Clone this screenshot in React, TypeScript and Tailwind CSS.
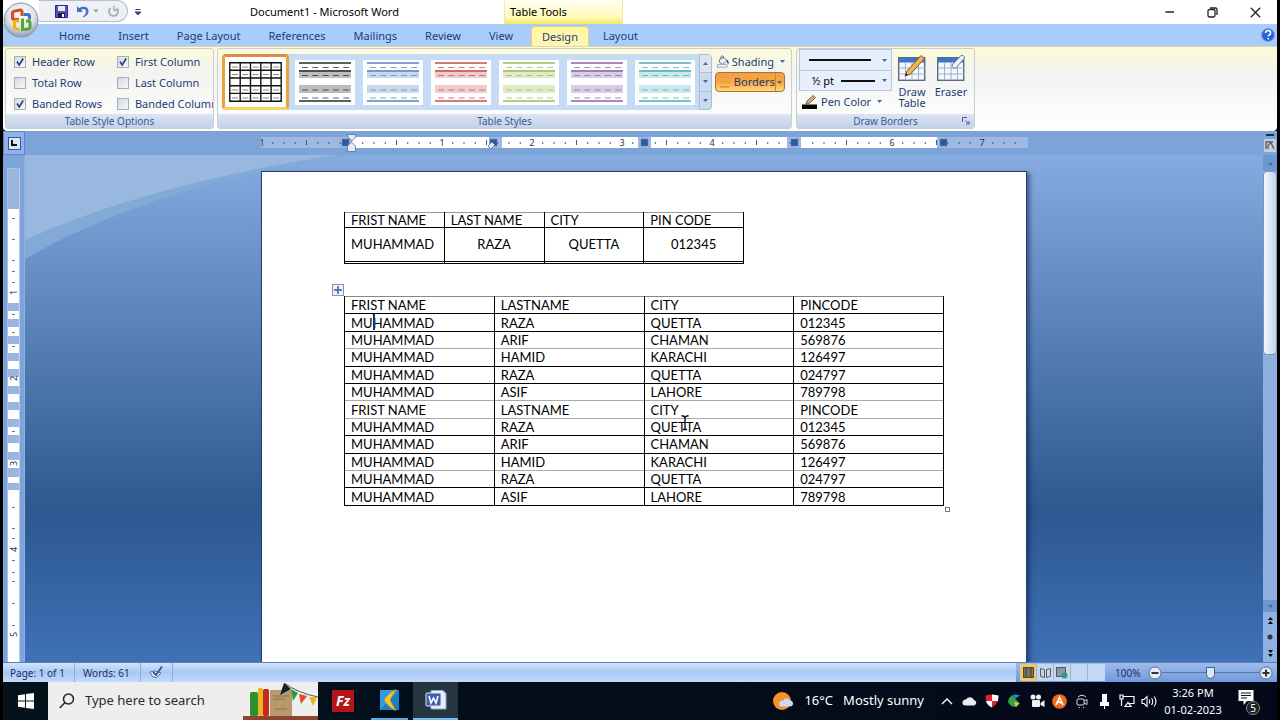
import React from "react";

const UI = "font-['Noto_Sans','Open_Sans',sans-serif]";

type RowData = { cells: string[]; soft?: boolean };

const people: RowData[] = [
  { cells: ["FRIST NAME", "LASTNAME", "CITY", "PINCODE"] },
  { cells: ["MUHAMMAD", "RAZA", "QUETTA", "012345"] },
  { cells: ["MUHAMMAD", "ARIF", "CHAMAN", "569876"], soft: true },
  { cells: ["MUHAMMAD", "HAMID", "KARACHI", "126497"] },
  { cells: ["MUHAMMAD", "RAZA", "QUETTA", "024797"] },
  { cells: ["MUHAMMAD", "ASIF", "LAHORE", "789798"], soft: true },
  { cells: ["FRIST NAME", "LASTNAME", "CITY", "PINCODE"], soft: true },
  { cells: ["MUHAMMAD", "RAZA", "QUETTA", "012345"] },
  { cells: ["MUHAMMAD", "ARIF", "CHAMAN", "569876"] },
  { cells: ["MUHAMMAD", "HAMID", "KARACHI", "126497"], soft: true },
  { cells: ["MUHAMMAD", "RAZA", "QUETTA", "024797"] },
  { cells: ["MUHAMMAD", "ASIF", "LAHORE", "789798"] },
];

function TitleBar() {
  return (
    <header className="flex h-6 shrink-0 items-stretch bg-white text-[11px] text-black">
      <div className="ml-9 flex h-[22px] w-[89px] items-center gap-2 rounded-r-full border border-l-0 border-[#b9bec8] bg-[#eef0f4] pl-4">
        <button aria-label="Save">
          <svg width="13" height="13" viewBox="0 0 13 13">
            <path d="M0.5 0.5h12v12h-12z" fill="#5a50b8" stroke="#2d2a86" />
            <rect x="3" y="1" width="7" height="5" fill="#e8ecfa" />
            <rect x="3" y="8" width="7" height="5" fill="#1d1b5c" />
            <rect x="7" y="9" width="2" height="3" fill="#fff" />
          </svg>
        </button>
        <button aria-label="Undo" className="flex items-center gap-1">
          <svg width="13" height="13" viewBox="0 0 13 13">
            <path d="M1 1v6h6L5 5c2-2 5-1 5 1.500S8 11 6 12.500c4-.8 6.500-3 6.500-6.500C12.500 1.500 7 .5 3.200 3.200z" fill="#3f6fc6" />
          </svg>
          <svg width="6" height="4" viewBox="0 0 6 4"><path d="M0.500 0.500h5L3 3.500z" fill="#8a94a8" /></svg>
        </button>
        <button aria-label="Repeat">
          <svg width="13" height="13" viewBox="0 0 13 13" fill="none" stroke="#a9b0bd" strokeWidth="2">
            <path d="M3.500 3.200a4.500 4.500 0 1 0 6 0" />
            <path d="M7 .8v4.500h4.500" strokeWidth="1.500" />
          </svg>
        </button>
      </div>
      <button aria-label="Customize Quick Access Toolbar" className="flex w-5 items-center justify-center">
        <svg width="6" height="7" viewBox="0 0 6 7"><path d="M0.500 0.500h5M0 3h6L3 6z" stroke="#334a7c" fill="#334a7c" strokeWidth="1" /></svg>
      </button>
      <h1 className="ml-[102px] w-[254px] self-center whitespace-nowrap leading-4">Document1 - Microsoft Word</h1>
      <div className="flex w-[119px] items-center border-x border-[#ece9b4] bg-linear-to-b from-[#fffef2] via-[#fffbb8] via-70% to-[#f5e664] pl-[5px] leading-4">
        Table Tools
      </div>
      <div className="ml-auto flex items-center text-[#222]">
        <button aria-label="Minimize" className="flex w-[42px] justify-center">
          <svg width="10" height="10" viewBox="0 0 10 10"><path d="M0.500 5h8.500" stroke="currentColor" strokeWidth="1.500" /></svg>
        </button>
        <button aria-label="Restore" className="flex w-[43px] justify-center">
          <svg width="11" height="11" viewBox="0 0 11 11" fill="none" stroke="currentColor" strokeWidth="1.300">
            <rect x="1" y="2.500" width="7" height="7.500" rx="1.500" /><path d="M3 1h5.500c1 0 1.500.5 1.500 1.500V8" />
          </svg>
        </button>
        <button aria-label="Close" className="flex w-[43px] justify-center">
          <svg width="11" height="11" viewBox="0 0 11 11"><path d="M.8.8l9.400 9.400M10.200.8L.8 10.200" stroke="currentColor" strokeWidth="1.300" /></svg>
        </button>
      </div>
    </header>
  );
}

function OfficeButton() {
  return (
    <button aria-label="Office Button" className="absolute left-[3px] top-[2px] z-10">
      <svg width="36" height="36" viewBox="0 0 36 36">
        <defs>
          <radialGradient id="orb" cx="50%" cy="35%" r="65%">
            <stop offset="0" stopColor="#ffffff" /><stop offset="0.6" stopColor="#dfe3ea" /><stop offset="1" stopColor="#8f9bb0" />
          </radialGradient>
        </defs>
        <circle cx="18" cy="18" r="17" fill="url(#orb)" stroke="#8793a8" />
        <g fill="none" strokeWidth="3">
          <path d="M16 17.500h-4.500q-2 0-2-2V11q0-1.500 2-1.900L17 8q2-.3 2 2v4" stroke="#d8491c" />
          <path d="M20.500 12.500h4q2 0 2 2v3" stroke="#3a74d0" />
          <path d="M16.500 19h-3.500q-1.500 0-1.500 1.500V25q0 1.500 2 1.900l3 .6" stroke="#efb312" />
          <path d="M19.500 16.500v11l5.500-.5q2-.3 2-2v-4q0-2-2-2h-2" stroke="#52a33a" />
        </g>
      </svg>
    </button>
  );
}

function Tabs() {
  const tabs = ["Home", "Insert", "Page Layout", "References", "Mailings", "Review", "View", "Design", "Layout"];
  return (
    <nav className="flex h-[22px] shrink-0 items-stretch bg-[#a9cdfa] pl-[42px] text-[11px] leading-4 text-[#1c3c80]">
      {tabs.map((t) => (
        <button
          key={t}
          className={
            t === "Design"
              ? "ml-1 mt-0.5 rounded-t border border-b-0 border-[#e0d47a] bg-linear-to-b from-[#fff9a0] to-[#fdf6b4] px-2.5"
              : "px-3.5 pt-0.5"
          }
        >
          {t}
        </button>
      ))}
      <button aria-label="Help" className="ml-auto mr-0.5 self-center">
        <svg width="14" height="14" viewBox="0 0 14 14">
          <circle cx="7" cy="7" r="6.500" fill="#2a63d8" stroke="#7ea2e6" />
          <path d="M4.500 5q.3-2.500 2.700-2.500T9.600 5q0 1.300-1.400 2-.9.500-.9 1.500M7.300 10v1.500" fill="none" stroke="#fff" strokeWidth="1.600" />
        </svg>
      </button>
    </nav>
  );
}

function Group({ title, className, launcher, children }: { title: string; className: string; launcher?: boolean; children: React.ReactNode }) {
  return (
    <section className={`flex shrink-0 flex-col overflow-hidden rounded-[3px] border border-[#c9ccd2] ${className}`}>
      <div className="flex min-h-0 flex-1">{children}</div>
      <div className="relative h-[14px] shrink-0 bg-linear-to-b from-[#dbe5f4] to-[#c3d0e6] text-center text-[10px] leading-[14px] text-[#3c5a96]">
        {title}
        {launcher && (
          <button aria-label="Draw Borders options" className="absolute right-1 top-[3px]">
            <svg width="8" height="8" viewBox="0 0 8 8" fill="none" stroke="#44608f"><path d="M.5 5V.5H5M3.500 3.500L7 7M7 4v3H4" /></svg>
          </button>
        )}
      </div>
    </section>
  );
}

function Option({ label, checked }: { label: string; checked?: boolean }) {
  return (
    <label className="flex h-[21px] items-center gap-[6px] whitespace-nowrap">
      <span className="relative flex h-3 w-3">
        <input
          type="checkbox"
          defaultChecked={checked}
          className="peer h-3 w-3 appearance-none border border-[#a3aebf] bg-linear-to-br from-[#d5dae2] to-[#f6f8fa]"
        />
        <svg className="pointer-events-none absolute left-0 top-0 hidden peer-checked:block" width="12" height="12" viewBox="0 0 12 12">
          <path d="M3 5.500L5.200 9 9.200 2.500" fill="none" stroke="#2a4378" strokeWidth="1.700" />
        </svg>
      </span>
      {label}
    </label>
  );
}

function GridThumb() {
  return (
    <svg width="53" height="40" viewBox="0 0 53 40">
      <rect width="53" height="40" fill="#fff" />
      <path d="M.8 .8h51.400v38.400H.8zM.8 8.300h51.400M.8 16h51.400M.8 23.700h51.400M.8 31.400h51.400M11.200 1v38M21.500 1v38M31.800 1v38M42.100 1v38" fill="none" stroke="#111" strokeWidth="1.400" />
      <path d="M3 5h50M3 12.500h50M3 28h50M3 36h50" stroke="#888" strokeWidth="1" strokeDasharray="6 4.300" />
    </svg>
  );
}

function StyleThumb({ line, band, name }: { line: string; band: string; name: string }) {
  return (
    <button aria-label={name} className="flex h-[45px] w-[60px] items-center justify-center bg-white">
      <svg width="52" height="40" viewBox="0 0 52 40">
        <rect y="8" width="52" height="8" fill={band} />
        <rect y="23" width="52" height="8" fill={band} />
        <path d="M0 1h52M0 9h52M0 39h52" stroke={line} strokeWidth="1.600" />
        <path d="M3 5.500h49M3 13.500h49M3 28h49M3 36h49" stroke={line} strokeWidth="1" strokeOpacity="0.750" strokeDasharray="6 4.300" />
      </svg>
    </button>
  );
}

const thumbs = [
  { name: "Light Shading", line: "#2b2b2b", band: "#bdbdbd" },
  { name: "Light Shading Accent 1", line: "#5b83b8", band: "#c9d9ec" },
  { name: "Light Shading Accent 2", line: "#c2504f", band: "#efcbcb" },
  { name: "Light Shading Accent 3", line: "#9cbb5c", band: "#dfebc8" },
  { name: "Light Shading Accent 4", line: "#8467a6", band: "#d8cde4" },
  { name: "Light Shading Accent 5", line: "#4bacb8", band: "#c8e8ec" },
];

function Caret({ up }: { up?: boolean }) {
  return (
    <svg width="5" height="3" viewBox="0 0 5 3" className="shrink-0">
      <path d={up ? "M0 3h5L2.500 0z" : "M0 0h5L2.500 3z"} fill="#48669c" />
    </svg>
  );
}

function TableIcon({ children }: { children: React.ReactNode }) {
  return (
    <svg width="28" height="28" viewBox="0 0 28 28">
      <rect x=".7" y="3.700" width="26" height="22.600" fill="#f4f7fc" stroke="#5a6a88" strokeWidth="1.400" />
      <rect x="1" y="4" width="25.500" height="4.500" fill="#3f74cc" />
      <path d="M1 14h26M1 20h26M7.500 8v18M14 8v18M20.500 8v18" stroke="#9fb0cc" />
      {children}
    </svg>
  );
}

function Ribbon() {
  return (
    <div className="flex h-[85px] shrink-0 items-stretch gap-[3px] rounded-b border-t border-[#dcd9a8] bg-linear-to-b from-[#fdfbd6] via-[#f3f3f1] via-30% to-white px-0.5 pb-0.5 pt-px text-[11px] leading-4 text-[#1f3b77]">
      <Group title="Table Style Options" className="w-[209px]">
        <div className="flex gap-[15px] pl-2 pt-[2px]">
          <div><Option label="Header Row" checked /><Option label="Total Row" /><Option label="Banded Rows" checked /></div>
          <div><Option label="First Column" checked /><Option label="Last Column" /><Option label="Banded Columns" /></div>
        </div>
      </Group>
      <Group title="Table Styles" className="w-[575px]">
        <div className="ml-1 mt-[5px] flex h-14 items-center gap-2 rounded bg-[#c6dcf5]">
          <button aria-label="Table Grid" className="-mr-0.5 flex h-14 w-[67px] items-center justify-center rounded-sm border-[3px] border-[#e8a33d] border-b-[#f7d060] border-t-[#dd8a4a] bg-white">
            <GridThumb />
          </button>
          {thumbs.map((t) => <StyleThumb key={t.name} {...t} />)}
          <div className="-ml-1 flex h-14 w-[13px] flex-col divide-y divide-[#a9bedc] rounded-r border border-[#a9bedc] bg-[#c9dbf1]">
            <button aria-label="Scroll up" className="flex flex-1 items-center justify-center bg-[#dfe3ea]"><Caret up /></button>
            <button aria-label="Scroll down" className="flex flex-1 items-center justify-center"><Caret /></button>
            <button aria-label="More styles" className="flex flex-1 items-center justify-center"><Caret /></button>
          </div>
        </div>
        <div className="ml-[3px] mt-[2px] flex w-[70px] flex-col">
          <button className="flex h-[21px] items-center gap-0.5 whitespace-nowrap pl-0.5">
            <svg width="16" height="15" viewBox="0 0 16 15">
              <path d="M3 5l5-3 4.500 4.500L7 11 3 8.500z" fill="#eef2f8" stroke="#555f75" />
              <path d="M5 5V2q0-1.500 1.500-1.500T8 2v2" fill="none" stroke="#555f75" />
              <path d="M12 5q3 1 2.500 6-2.500-1-2.500-6" fill="#2a56ac" />
              <rect x=".5" y="11.500" width="12" height="3" fill="#fff" stroke="#8a93a6" />
            </svg>
            Shading<span className="ml-1 flex"><Caret /></span>
          </button>
          <button className="flex h-5 items-center rounded-sm border border-[#a8742c] bg-linear-to-b from-[#f0a048] via-[#f7a63c] to-[#ffd97a] pl-1">
            <svg width="12" height="14" viewBox="0 0 12 14"><path d="M1 1h11M1 7h11" stroke="#c78a3a" strokeDasharray="1 1" /><path d="M0 13h12" stroke="#8a5a1c" strokeWidth="1" strokeDasharray="3 1" /></svg>
            <span className="ml-1 flex-1 text-left">Borders</span>
            <span className="flex h-full w-[11px] items-center justify-center border-l border-[#c8822e]"><Caret /></span>
          </button>
        </div>
      </Group>
      <Group title="Draw Borders" className="ml-px w-[179px]" launcher>
        <div className="ml-0.5 flex w-[93px] flex-col">
          <button aria-label="Line Style" className="flex h-[22px] items-center justify-between border border-[#b4c7e2] bg-[#e6effa] pl-[9px] pr-1">
            <svg width="62" height="2"><rect width="62" height="2" fill="#111" /></svg><Caret />
          </button>
          <button aria-label="Line Weight" className="flex h-5 items-center justify-between border border-t-0 border-[#b4c7e2] bg-[#e6effa] pl-3 pr-1 text-black">
            ½ pt<svg width="34" height="2"><rect width="34" height="2" fill="#111" /></svg><Caret />
          </button>
          <button className="flex h-[21px] items-center gap-1 whitespace-nowrap pl-[3px]">
            <svg width="15" height="14" viewBox="0 0 15 14"><path d="M4 9l1-3 6-5.500 2.500 2L8 8z" fill="#c9b184" stroke="#5f4c2c" strokeWidth=".8" /><rect y="9.500" width="15" height="4.500" fill="#000" /></svg>
            Pen Color<span className="ml-0.5 flex"><Caret /></span>
          </button>
        </div>
        <div className="flex flex-1 gap-[3px] pl-0.5 pt-[5px] text-center leading-[11px]">
          <button className="flex w-9 flex-col items-center gap-1">
            <TableIcon><path d="M7 22l2-5L23 1.500 26.500 4.500 12.500 20z" fill="#f2b54c" stroke="#7a5a2a" /><path d="M7 22l1-3 2 2z" fill="#222" /></TableIcon>
            <span>Draw Table</span>
          </button>
          <button className="flex w-9 flex-col items-center gap-1">
            <TableIcon><path d="M15 11L24 1.500q3-1 3.500 2.500L19 14q-4 1-4-3z" fill="#eef1f6" stroke="#6a7690" /></TableIcon>
            <span>Eraser</span>
          </button>
        </div>
      </Group>
    </div>
  );
}

function HorizontalRuler() {
  const ticks = Array.from({ length: 67 }, (_, i) => i - 7);
  return (
    <svg width="767" height="18" viewBox="0 0 767 18" className="shrink-0">
      <rect y="3" width="767" height="11" fill="#9db9e2" />
      {[[91, 137], [241, 136], [390, 136], [540, 136]].map(([x, w]) => <rect key={x} x={x} y="3" width={w} height="11" fill="#fff" />)}
      {ticks.map((i) => {
        const x = 90 + i * 11.25;
        if (i % 8 === 0) return null;
        return i % 4 === 0
          ? <rect key={i} x={x} y="6" width="1" height="5" fill="#4b5a75" />
          : <rect key={i} x={x} y="8" width="1" height="2" fill="#4b5a75" />;
      })}
      {[[0, "1"], [180, "1"], [270, "2"], [360, "3"], [450, "4"], [630, "6"], [720, "7"]].map(([x, n]) => (
        <text key={x} x={Number(x) + 1} y="12" fontSize="9" textAnchor="middle" fill="#2a3344">{n}</text>
      ))}
      {[81, 229, 380, 530, 679].map((x) => <rect key={x} x={x} y="5" width="7" height="7" fill="#2f5a9e" stroke="#5f86c0" strokeWidth=".5" />)}
      <path d="M86.500.5h8v2.500l-3.500 4-4-4zM90.500 8l4 4v5.500h-8V12z" fill="#e3ebf6" stroke="#5a6e92" strokeWidth=".8" />
      <path d="M227 12l4-4 3 3-4 4z" fill="#e3ebf6" stroke="#5a6e92" strokeWidth=".8" />
    </svg>
  );
}

function VerticalRuler() {
  const white = [[41, 94], [143, 8], [159, 9], [176, 9], [193, 8], [209, 9], [226, 8], [242, 9], [259, 8], [275, 9], [292, 8], [309, 6], [322, 172]];
  return (
    <svg width="13" height="494" viewBox="0 0 13 494" className="shrink-0">
      <rect width="12.500" height="494" fill="#9bb5de" stroke="#b8cdec" />
      {white.map(([y, h]) => <rect key={y} x="1" y={y} width="11" height={h} fill="#fff" />)}
      {[50, 71, 92, 103, 114, 146, 164, 178, 263, 339, 360, 370, 392, 404, 413, 435, 457].map((y) => <rect key={y} x="5" y={y} width="3" height="1" fill="#66738c" />)}
      {[[125, "1"], [211, "2"], [296, "3"], [382, "4"], [467, "5"]].map(([y, n]) => (
        <text key={n} transform={`translate(10 ${Number(y) + 2}) rotate(-90)`} fontSize="9" fill="#2a3344">{n}</text>
      ))}
    </svg>
  );
}

function DocTableSmall() {
  const cell = "border-x border-black px-[7px] text-center";
  return (
    <table className="h-[52px] w-[400px] table-fixed border-collapse text-left">
      <thead>
        <tr className="border-b border-t border-black border-t-[#999]">
          {["FRIST NAME", "LAST NAME", "CITY", "PIN CODE"].map((h) => <th key={h} className="whitespace-nowrap border-x border-black px-[6px] font-normal">{h}</th>)}
        </tr>
      </thead>
      <tbody>
        <tr className="border-b border-black">
          <td className="border-x border-black px-[6px]">MUHAMMAD</td>
          <td className={cell}>RAZA</td><td className={cell}>QUETTA</td><td className={cell}>012345</td>
        </tr>
        <tr className="border-b border-black">{[0, 1, 2, 3].map((i) => <td key={i} className={cell} />)}</tr>
      </tbody>
    </table>
  );
}

function DocTableLarge() {
  return (
    <table className="h-[210px] w-[600px] table-fixed border-collapse border-t border-[#888] text-left">
      <tbody>
        {people.map((r, i) => (
          <tr key={i} className={r.soft ? "border-b border-[#aaa]" : "border-b border-black"}>
            {r.cells.map((c, j) => (
              <td key={j} className="border-x border-x-black px-[6px]">
                {i === 1 && j === 0 ? (
                  <span className="relative">{c}<span className="absolute -top-px left-[22px] h-4 w-0.5 bg-[#0c3a66]" /></span>
                ) : i === 7 && j === 2 ? (
                  <span className="relative">
                    {c}
                    <svg className="absolute -top-1 left-[30px]" width="8" height="16" viewBox="0 0 8 16"><path d="M.5.8Q4 .8 4 3.500 4 .8 7.500.8M4 3v11M2 14.500h4" fill="none" stroke="#111" strokeWidth="1.400" /></svg>
                  </span>
                ) : c}
              </td>
            ))}
          </tr>
        ))}
      </tbody>
    </table>
  );
}

function ScrollBar() {
  return (
    <div className="flex w-[14px] shrink-0 flex-col items-center bg-[#b4cbea] text-[#16305e]">
      <button aria-label="Scroll up" className="flex h-4 w-full items-center justify-center bg-[#6f97cf]"><Caret up /></button>
      <div className="flex w-full flex-1 flex-col bg-[#8fb0de]">
        <div className="h-[43%] w-full rounded-sm border border-[#7d93b8] bg-linear-to-r from-[#f4f7fb] to-[#c3d2e8]" />
      </div>
      <button aria-label="Scroll down" className="flex h-3 w-full items-center justify-center bg-[#6f97cf]"><Caret /></button>
      <div className="flex h-[50px] w-full flex-col items-center justify-around bg-[#8fb2e2]">
        <button aria-label="Previous page"><svg width="5" height="7" viewBox="0 0 5 7"><path d="M0 3h5L2.500 0zM0 7h5L2.500 4z" fill="#000" /></svg></button>
        <button aria-label="Browse object"><svg width="6" height="6" viewBox="0 0 6 6"><circle cx="3" cy="3" r="2.500" fill="#334" /></svg></button>
        <button aria-label="Next page"><svg width="5" height="7" viewBox="0 0 5 7"><path d="M0 0h5L2.500 3zM0 4h5L2.500 7z" fill="#000" /></svg></button>
      </div>
    </div>
  );
}

function Workspace() {
  return (
    <div className="flex min-h-0 flex-1 flex-col bg-[#7da4d8]">
      <div className="flex h-6 shrink-0 items-center">
        <div className="flex h-full w-[22px] items-center justify-center border border-[#5b86c6] bg-[#8fb3e4]">
          <button aria-label="Tab selector" className="flex h-[13px] w-[13px] items-center justify-center border border-[#35589a] bg-[#dbe7f7]">
            <svg width="6" height="6" viewBox="0 0 6 6"><path d="M1 0v5h5" fill="none" stroke="#111" strokeWidth="2" /></svg>
          </button>
        </div>
        <div className="flex flex-1 justify-center"><HorizontalRuler /></div>
        <div className="flex w-[14px] flex-col items-center gap-[3px]">
          <span className="h-0.5 w-2 bg-[#16305e]" />
          <button aria-label="View Ruler">
            <svg width="12" height="13" viewBox="0 0 12 13"><rect width="12" height="13" fill="#c7ccd6" /><path d="M2 10V3h7M4 6l3-2 3 6M4 6v4" fill="none" stroke="#555b68" strokeWidth="1.300" /></svg>
          </button>
        </div>
      </div>
      <div className="flex min-h-0 flex-1">
        <div className="flex w-[22px] shrink-0 items-start justify-center overflow-hidden border-r border-[#8db1e2] bg-[#7da4d8] pt-[13px]"><VerticalRuler /></div>
        <main className="relative flex min-w-0 flex-1 justify-center overflow-hidden bg-linear-to-b from-[#86abe0] via-[#2d5890] via-70% to-[#3f71b8]">
          <svg className="absolute left-0 top-0" width="320" height="104" viewBox="0 0 320 104">
            <path d="M0 0h320Q120 34 0 104z" fill="#83a9d6" />
            <path d="M0 0h310Q120 30 0 85z" fill="#98b8e0" />
          </svg>
          <article className="relative mt-4 w-[766px] border border-b-0 border-[#24406e] bg-white pl-[82px] pt-10 font-['Lato','Open_Sans',sans-serif] text-[13px] leading-[14px] text-black shadow-[3px_2px_4px_rgba(10,30,70,0.5)]">
            <DocTableSmall />
            <div className="relative mt-8 w-[600px]">
              <svg className="absolute -left-3 -top-3" width="12" height="12" viewBox="0 0 12 12"><rect x=".5" y=".5" width="11" height="11" fill="#eef3fb" stroke="#8793ab" /><path d="M6 2v8M2 6h8" stroke="#35589a" strokeWidth="1.400" /></svg>
              <DocTableLarge />
              <span className="absolute -bottom-1.5 -right-1.5 h-[5px] w-[5px] border border-[#777] bg-white" />
            </div>
          </article>
        </main>
        <ScrollBar />
      </div>
    </div>
  );
}

function StatusBar() {
  return (
    <footer className="flex h-5 shrink-0 items-stretch border-t border-[#5c7fb5] bg-linear-to-b from-[#d3e3fa] via-[#a9c8f3] to-[#c4dafa] text-[10px] leading-5 text-[#1a2f66]">
      <span className="w-[72px] border-r border-[#8fadd9] pl-[7px]">Page: 1 of 1</span>
      <span className="w-[66px] border-r border-[#8fadd9] pl-2">Words: 61</span>
      <button aria-label="Proofing" className="flex w-8 items-center justify-center border-r border-[#8fadd9]">
        <svg width="15" height="13" viewBox="0 0 15 13"><path d="M1 6l5-1 6 2-5 5q-5-1-6-6z" fill="#e8eef8" stroke="#5c6f96" /><path d="M4 6l3 3 6-8.500" fill="none" stroke="#2f57a0" strokeWidth="1.800" /></svg>
      </button>
      <div className="ml-auto flex items-center bg-linear-to-b from-[#9dbcea] to-[#6f9ada] pl-1">
        <div className="flex h-[17px] divide-x divide-[#9db6da] bg-[#c5d8f2]">
          <button aria-label="Print Layout" className="flex w-[17px] items-center justify-center bg-[#f6c766]"><svg width="11" height="11" viewBox="0 0 11 11"><rect x=".5" y=".5" width="10" height="10" fill="#7b7663" stroke="#4c4a42" /><path d="M3 1v9M8 1v9" stroke="#3c3a36" /></svg></button>
          <button aria-label="Full Screen Reading" className="flex w-[17px] items-center justify-center"><svg width="11" height="11" viewBox="0 0 11 11"><path d="M.5 1.500l4 1v8l-4-1zM10.500 1.500l-4 1v8l4-1z" fill="#cfd3da" stroke="#555d6c" /></svg></button>
          <button aria-label="Web Layout" className="flex w-[17px] items-center justify-center"><svg width="12" height="12" viewBox="0 0 12 12"><rect x=".5" y=".5" width="9" height="9" fill="#8e97a8" stroke="#4f596c" /><circle cx="8.500" cy="8.500" r="3" fill="#2f9a7c" /></svg></button>
          <button aria-label="Outline" className="w-[17px]" />
          <button aria-label="Draft" className="w-[17px]" />
        </div>
        <span className="w-[43px] pl-2.5">100%</span>
        <button aria-label="Zoom out" className="flex"><svg width="14" height="14" viewBox="0 0 14 14"><circle cx="7" cy="7" r="6" fill="#e6ecf5" stroke="#5d6f91" /><path d="M3.500 7h7" stroke="#333" strokeWidth="2" /></svg></button>
        <input
          type="range"
          aria-label="Zoom"
          defaultValue={50}
          className="h-3 w-[97px] appearance-none bg-[linear-gradient(#5577ad,#5577ad)] bg-[length:100%_1px] bg-center bg-no-repeat [&::-webkit-slider-thumb]:h-3 [&::-webkit-slider-thumb]:w-[9px] [&::-webkit-slider-thumb]:appearance-none [&::-webkit-slider-thumb]:rounded-b-full [&::-webkit-slider-thumb]:border [&::-webkit-slider-thumb]:border-[#44608f] [&::-webkit-slider-thumb]:bg-[#dbe5f3]"
        />
        <button aria-label="Zoom in" className="mr-1 flex"><svg width="14" height="14" viewBox="0 0 14 14"><circle cx="7" cy="7" r="6" fill="#e6ecf5" stroke="#5d6f91" /><path d="M3.500 7h7M7 3.500v7" stroke="#333" strokeWidth="2" /></svg></button>
      </div>
    </footer>
  );
}

function Tray() {
  return (
    <div className="flex items-center text-white">
      <button className="mr-3 flex items-center gap-2.5 whitespace-nowrap text-[13px]">
        <svg width="22" height="20" viewBox="0 0 22 20"><circle cx="10" cy="10" r="9" fill="#f5922c" /><path d="M9 15.500h9a3 3 0 0 0 0-6 4 4 0 0 0-7 0 3.200 3.200 0 0 0-2 6z" fill="#c9dcf5" /></svg>
        <span>16°C</span><span>Mostly sunny</span>
      </button>
      <div className="flex items-center">
        <button aria-label="Hidden icons" className="flex w-[22px] justify-center"><svg width="12" height="7" viewBox="0 0 12 7"><path d="M1 6l5-5 5 5" fill="none" stroke="#fff" strokeWidth="1.300" /></svg></button>
        <button aria-label="OneDrive" className="flex w-[23px] justify-center"><svg width="15" height="10" viewBox="0 0 15 10"><path d="M3 9.500h9a2.800 2.800 0 0 0 0-5.500A4.500 4.500 0 0 0 4 3.500a3 3 0 0 0-1 6z" fill="#e8eaee" /></svg></button>
        <button aria-label="Antivirus" className="flex w-[22px] justify-center"><svg width="14" height="14" viewBox="0 0 14 14"><path d="M.5 1.500L7 .5l6.500 1Q13.500 10 7 13.500.5 10 .5 1.500z" fill="#e0262c" /><path d="M7 .5l6.500 1L13 7H7zM7 7v6.500Q2 11 1 7z" fill="#fff" /></svg></button>
        <button aria-label="Download manager" className="flex w-[23px] justify-center"><svg width="15" height="14" viewBox="0 0 15 14"><path d="M1 8q0-6 7-7.500l5 1-5 3 5 5-4 3.500Q3 13 1 8z" fill="#2fa343" /><path d="M8 .5l5 1-5 3-3-2z" fill="#2f78d8" /><path d="M7 8l5 1-3 4z" fill="#e4d43a" /></svg></button>
        <button aria-label="Recorder" className="flex w-[22px] justify-center"><svg width="15" height="14" viewBox="0 0 15 14" fill="#f0f0f0"><circle cx="3" cy="3" r="2.500" /><circle cx="8.500" cy="3" r="2.500" /><rect x="2" y="6" width="8" height="7" rx="1" /><path d="M10.500 9L14.500 6v7l-4-2z" /></svg></button>
        <button aria-label="Avast" className="flex w-[23px] justify-center"><svg width="15" height="15" viewBox="0 0 15 15"><circle cx="7.500" cy="7.500" r="7.300" fill="#f36a1d" /><path d="M4 11l3.500-7.500L11 11M5.500 8.500q2-1 4.500.5" fill="none" stroke="#fff" strokeWidth="1.600" /></svg></button>
        <button aria-label="Meet now" className="flex w-[22px] justify-center"><svg width="12" height="15" viewBox="0 0 12 15" fill="none" stroke="#d8d8d8"><path d="M2 3q4-3.500 8 0" /><rect x="1" y="5" width="7" height="6" rx="1" /><path d="M8 7l3-1.500v5L8 9M3 13.500h1M7 13.500h1" /></svg></button>
        <button aria-label="Eject media" className="flex w-[22px] justify-center"><svg width="11" height="15" viewBox="0 0 11 15" fill="#fff"><rect x="3" y="0" width="5" height="8" /><rect x="1" y="8" width="9" height="4" /><path d="M5 12h1v3H5z" /></svg></button>
        <button aria-label="Network" className="flex w-[23px] justify-center"><svg width="16" height="14" viewBox="0 0 16 14" fill="none" stroke="#fff" strokeWidth="1.200"><path d="M4 2.500h11v7H9M1 1v4h3V1zM2.500 5v7M6 12.500h6L9 8.500z" /></svg></button>
        <button aria-label="Volume" className="flex w-[22px] justify-center"><svg width="17" height="13" viewBox="0 0 17 13" fill="none" stroke="#fff" strokeWidth="1.100"><path d="M1 4.500h2L6 1.500v10L3 8.500H1zM8 4.500q1.500 2 0 4M10.500 3q2.500 3.500 0 7M13 1.500q4 5 0 10" /></svg></button>
      </div>
      <button className="ml-1 w-[58px] text-center text-[11px] leading-[17px]">3:26 PM<br />01-02-2023</button>
      <button aria-label="Notifications" className="relative ml-4 mr-[17px] flex h-6 w-[22px]">
        <svg width="16" height="17" viewBox="0 0 16 17"><path d="M.5 1h15v11H9l-3.500 4v-4h-5z" fill="#fff" /><path d="M3 4h10M3 6.500h10M3 9h6" stroke="#111" /></svg>
        <span className="absolute -bottom-0.5 right-0 flex h-[14px] w-[14px] items-center justify-center rounded-full border border-[#888] bg-[#1c2028] text-[10px] leading-3">5</span>
      </button>
    </div>
  );
}

function Taskbar() {
  return (
    <div className="flex h-[38px] shrink-0 items-stretch justify-between bg-linear-to-r from-[#03121b] to-[#040818]">
      <div className="flex items-stretch">
        <button aria-label="Start" className="flex w-[45px] items-center justify-center">
          <svg width="16" height="16" viewBox="0 0 16 16" fill="#fff"><path d="M0 2.200l7-1v6.300H0zM8 1l8-1v7.500H8zM0 8.500h7v6.300l-7-1zM8 8.500h8V16l-8-1z" /></svg>
        </button>
        <label className="flex w-[270px] items-center bg-[#eeeeee] pl-[11px]">
          <svg width="16" height="16" viewBox="0 0 16 16" fill="none" stroke="#222" strokeWidth="1.500"><circle cx="9.500" cy="6" r="5" /><path d="M6 9.500L.8 15" /></svg>
          <input aria-label="Search" placeholder="Type here to search" className="ml-2.5 w-[157px] min-w-0 bg-transparent text-[13px] outline-none placeholder:text-[#2a2a2a] placeholder:opacity-100" />
          <svg width="75" height="37" viewBox="0 0 75 37" className="ml-auto">
            <rect x="0" y="33" width="75" height="4" fill="#8e4530" />
            <rect x="7" y="9" width="8" height="24" rx="1.500" fill="#2f8f2c" />
            <rect x="15" y="5" width="5" height="28" rx="1.500" fill="#e8b422" />
            <rect x="20" y="6" width="6" height="27" rx="1.500" fill="#c9281f" />
            <rect x="27" y="7" width="22" height="26" rx="1" fill="#b79a6c" />
            <path d="M30 13h16M30 16h12M32 26h12" stroke="#8c7145" />
            <path d="M41 0Q55 10 75 14" fill="none" stroke="#555" />
            <path d="M41 0l7 6-11 6z" fill="#1c2124" />
            <path d="M48 6l7 4-5 8z" fill="#2f9a3a" />
            <path d="M56 11l8 2-6 8z" fill="#e2492c" />
            <path d="M66 14l8 0-4 9z" fill="#e8b422" />
          </svg>
        </label>
        <button aria-label="FileZilla" className="ml-[2px] flex w-[46px] items-center justify-center">
          <span className="flex h-[22px] w-[22px] items-center justify-center bg-[#b3151b] text-[14px] font-bold italic leading-none text-white">Fz</span>
        </button>
        <button aria-label="Recorder" className="flex w-[47px] items-center justify-center">
          <span className="flex h-full w-[37px] items-center justify-center border-b-2 border-[#63a8dc]">
            <svg width="20" height="22" viewBox="0 0 20 22"><rect y="1" width="19" height="20" fill="#1d7fc2" /><path d="M0 1h19L0 21z" fill="#2f9be0" /><path d="M16 0q-9 5-12 11 4 7 12 11-3-6-6-11 3-5 6-11z" fill="#f7c531" stroke="#b8860f" strokeWidth=".6" /></svg>
          </span>
        </button>
        <button aria-label="Document1 - Microsoft Word" className="flex w-[45px] items-center justify-center border-b-2 border-[#76b9ed] bg-[#263640]">
          <svg width="22" height="20" viewBox="0 0 22 20"><path d="M6 .5h12l3 3V19H6z" fill="#e6edf8" stroke="#8fa4c8" /><rect x="1" y="3" width="15" height="13" rx="1" fill="#3a5fae" stroke="#dbe5f5" /><path d="M4 6l2 7 2.500-5L11 13l2-7" fill="none" stroke="#fff" strokeWidth="1.600" /></svg>
        </button>
      </div>
      <Tray />
    </div>
  );
}

export default function App() {
  return (
    <div className={`relative flex h-screen flex-col overflow-hidden bg-black px-[3px] ${UI}`}>
      <OfficeButton />
      <TitleBar />
      <Tabs />
      <Ribbon />
      <Workspace />
      <StatusBar />
      <Taskbar />
    </div>
  );
}
